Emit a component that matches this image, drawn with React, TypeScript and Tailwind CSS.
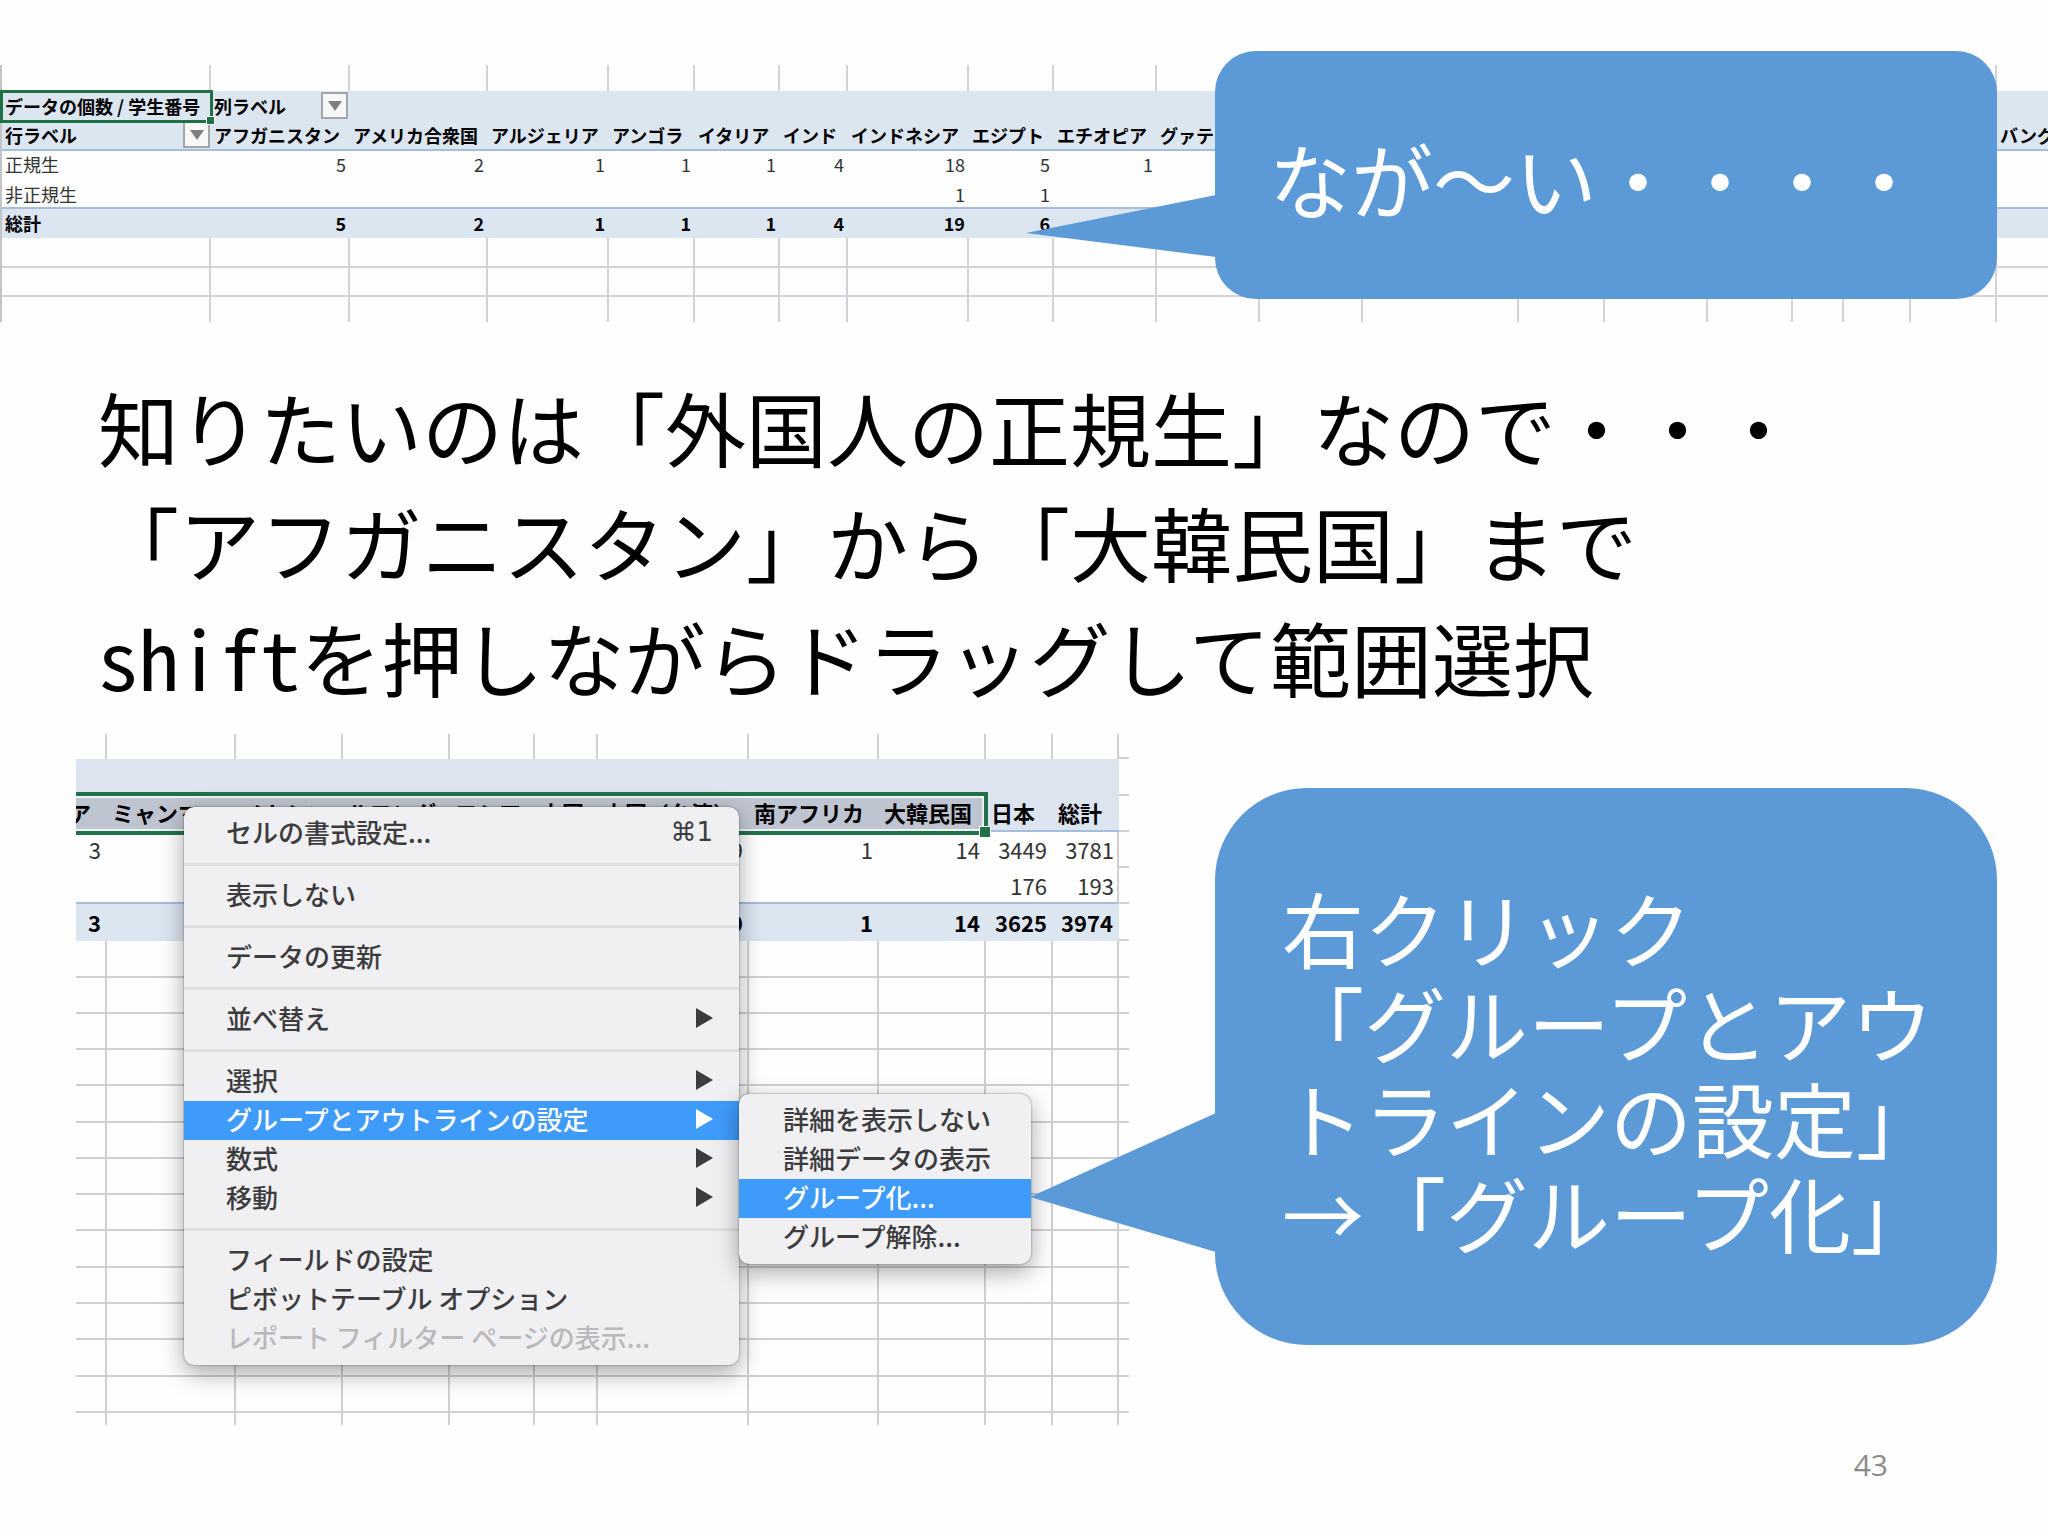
import type { ReactNode } from "react";
import clsx from "clsx";

const countries = [
  { name: "アフガニスタン", width: "w-[139px]", regular: "5", other: "", total: "5" },
  { name: "アメリカ合衆国", width: "w-[138px]", regular: "2", other: "", total: "2" },
  { name: "アルジェリア", width: "w-[121px]", regular: "1", other: "", total: "1" },
  { name: "アンゴラ", width: "w-[86px]", regular: "1", other: "", total: "1" },
  { name: "イタリア", width: "w-[85px]", regular: "1", other: "", total: "1" },
  { name: "インド", width: "w-[68px]", regular: "4", other: "", total: "4" },
  { name: "インドネシア", width: "w-[121px]", regular: "18", other: "1", total: "19" },
  { name: "エジプト", width: "w-[85px]", regular: "5", other: "1", total: "6" },
  { name: "エチオピア", width: "w-[103px]", regular: "1", other: "", total: "" },
  { name: "グァテマラ", width: "w-[103px]", regular: "", other: "", total: "" },
  { name: "", width: "w-[103px]", regular: "", other: "", total: "" },
  { name: "", width: "w-[156px]", regular: "", other: "", total: "" },
  { name: "", width: "w-[86px]", regular: "", other: "", total: "" },
  { name: "", width: "w-[103px]", regular: "", other: "", total: "" },
  { name: "", width: "w-[85px]", regular: "", other: "", total: "" },
  { name: "", width: "w-[51px]", regular: "", other: "", total: "" },
  { name: "", width: "w-[67px]", regular: "", other: "", total: "" },
  { name: "", width: "w-[86px]", regular: "", other: "", total: "" },
  { name: "バングラデシュ", width: "w-[139px]", regular: "", other: "", total: "" },
];

const detail = [
  { name: "ア", width: "w-[31px]", regular: "3", other: "", total: "3", selected: true },
  { name: "ミャンマー", width: "w-[129px]", regular: "", other: "", total: "", selected: true },
  { name: "メキシコ", width: "w-[107px]", regular: "", other: "", total: "", selected: true },
  { name: "ルワンダ", width: "w-[107px]", regular: "", other: "", total: "", selected: true },
  { name: "ロシア", width: "w-[85px]", regular: "", other: "", total: "", selected: true },
  { name: "中国", width: "w-[63px]", regular: "", other: "", total: "", selected: true },
  { name: "中国（台湾）", width: "w-[151px]", regular: "9", other: "", total: "9", selected: true },
  { name: "南アフリカ", width: "w-[130px]", regular: "1", other: "", total: "1", selected: true },
  { name: "大韓民国", width: "w-[107px]", regular: "14", other: "", total: "14", selected: true },
  { name: "日本", width: "w-[67px]", regular: "3449", other: "176", total: "3625", selected: false },
  { name: "総計", width: "w-[66px]", regular: "3781", other: "193", total: "3974", selected: false },
];

// empty sheet rows under the pivot table
const blankRows = [
  "h-[37px]", "h-[36px]", "h-[36px]", "h-[36px]", "h-[37px]", "h-[36px]", "h-[36px]",
  "h-[36px]", "h-[37px]", "h-[36px]", "h-[36px]", "h-[37px]", "h-[36px]",
];

type Entry = { label: string; shortcut?: string; arrow?: boolean; active?: boolean; disabled?: boolean };

const menuGroups: Entry[][] = [
  [{ label: "セルの書式設定...", shortcut: "⌘1" }],
  [{ label: "表示しない" }],
  [{ label: "データの更新" }],
  [{ label: "並べ替え", arrow: true }],
  [
    { label: "選択", arrow: true },
    { label: "グループとアウトラインの設定", arrow: true, active: true },
    { label: "数式", arrow: true },
    { label: "移動", arrow: true },
  ],
  [
    { label: "フィールドの設定" },
    { label: "ピボットテーブル オプション" },
    { label: "レポート フィルター ページの表示...", disabled: true },
  ],
];

const submenu: Entry[] = [
  { label: "詳細を表示しない" },
  { label: "詳細データの表示" },
  { label: "グループ化...", active: true },
  { label: "グループ解除..." },
];

function FilterButton({ label }: { label: string }) {
  return (
    <button
      type="button"
      aria-label={label}
      className="flex h-[27px] w-[27px] shrink-0 items-center justify-center border-2 border-[#a3a5a8] bg-[#f7f7f8]"
    >
      <svg viewBox="0 0 14 10" className="h-[10px] w-[14px]">
        <path d="M0 0h14L7 10z" fill="#7f7f7f" />
      </svg>
    </button>
  );
}

function MenuItem({ item, pad }: { item: Entry; pad: string }) {
  return (
    <button
      type="button"
      disabled={item.disabled}
      className={clsx(
        "flex h-[39px] w-full items-center justify-between whitespace-nowrap pb-1 text-left text-[26px] leading-none",
        pad,
        item.active ? "bg-[#3f9bfa] text-white" : item.disabled ? "text-[#b9b8ba]" : "text-[#3c3c3e]"
      )}
    >
      <span>{item.label}</span>
      {item.shortcut && <span className="font-['DejaVu_Sans','Noto_Sans_CJK_JP',sans-serif]">{item.shortcut}</span>}
      {item.arrow && (
        <svg viewBox="0 0 17 20" className="h-5 w-[17px]">
          <path d="M0 0l17 10L0 20z" fill="currentColor" />
        </svg>
      )}
    </button>
  );
}

function SummaryTable() {
  const grid = "border-r-2 border-[#d3d2d6]";
  return (
    <table className="w-[2108px] table-fixed border-separate border-spacing-0 border-l-2 border-[#c4c4c8] text-[18px] leading-none text-black">
      <colgroup>
        <col className="w-[209px]" />
        {countries.map((c, i) => (
          <col key={i} className={c.width} />
        ))}
      </colgroup>
      <tbody>
        <tr className="h-[26px]">
          <td className={grid} />
          {countries.map((_, i) => (
            <td key={i} className={grid} />
          ))}
        </tr>
        <tr className="h-[29px] bg-[#dce6f1]">
          <th className="relative p-0 pl-[3px] text-left whitespace-nowrap">
            データの個数 / 学生番号
            <span className="absolute -top-px -bottom-[3px] -left-[2px] -right-[2px] border-[3px] border-[#1f7145]" />
            <span className="absolute -bottom-[5px] -right-[4px] h-[9px] w-[9px] border border-white bg-[#1f7145]" />
          </th>
          <th className="p-0 pl-[3px]">
            <div className="flex items-center justify-between pr-[2px]">
              列ラベル
              <FilterButton label="列ラベルの絞り込み" />
            </div>
          </th>
          {countries.slice(1).map((_, i) => (
            <th key={i} />
          ))}
        </tr>
        <tr className="h-[31px] bg-[#dce6f1]">
          <th className="border-b-2 border-[#a5bedb] p-0 pl-[3px]">
            <div className="flex items-center justify-between pr-px">
              行ラベル
              <FilterButton label="行ラベルの絞り込み" />
            </div>
          </th>
          {countries.map((c, i) => (
            <th key={i} className="border-b-2 border-[#a5bedb] p-0 pl-[3px] text-left whitespace-nowrap">
              {c.name}
            </th>
          ))}
        </tr>
        <tr className="h-[29px]">
          <td className="p-0 pb-1 pl-[3px] text-[#333]">正規生</td>
          {countries.map((c, i) => (
            <td key={i} className="p-0 pr-1 pb-1 text-right text-[#333]">{c.regular}</td>
          ))}
        </tr>
        <tr className="h-[29px]">
          <td className="border-b-2 border-[#a5bedb] p-0 pl-[3px] text-[#333]">非正規生</td>
          {countries.map((c, i) => (
            <td key={i} className="border-b-2 border-[#a5bedb] p-0 pr-1 text-right text-[#333]">{c.other}</td>
          ))}
        </tr>
        <tr className="h-[29px] bg-[#dce6f1]">
          <th className="p-0 pb-0.5 pl-[3px] text-left">総計</th>
          {countries.map((c, i) => (
            <td key={i} className="p-0 pr-1 pb-0.5 text-right font-bold">{c.total}</td>
          ))}
        </tr>
        {["h-[30px]", "h-[29px]"].map((h) => (
          <tr key={h} className={h}>
            <td className={clsx(grid, "border-b-2")} />
            {countries.map((_, i) => (
              <td key={i} className={clsx(grid, "border-b-2")} />
            ))}
          </tr>
        ))}
        <tr className="h-[25px]">
          <td className={grid} />
          {countries.map((_, i) => (
            <td key={i} className={grid} />
          ))}
        </tr>
      </tbody>
    </table>
  );
}

function DetailTable() {
  const grid = "border-r-2 border-[#d0cfd4]";
  const stub = "border-b-2 border-[#d0cfd4]";
  return (
    <table className="w-[1053px] table-fixed border-separate border-spacing-0 text-[22px] leading-none text-black">
      <colgroup>
        {detail.map((c) => (
          <col key={c.name} className={c.width} />
        ))}
        <col className="w-[10px]" />
      </colgroup>
      <tbody>
        <tr className="h-[25px]">
          {detail.map((c) => (
            <td key={c.name} className={grid} />
          ))}
          <td className={stub} />
        </tr>
        <tr className="h-[37px]">
          {detail.map((c) => (
            <td key={c.name} className="bg-[#dce4f0]" />
          ))}
          <td className={stub} />
        </tr>
        <tr className="h-[36px]">
          {detail.map((c, i) => (
            <th
              key={c.name}
              className={clsx(
                "border-b-2 border-[#a5bedb] p-0 pb-0.5 text-left whitespace-nowrap",
                c.selected ? "bg-[#bfc5d0]" : "bg-[#dce4f0]"
              )}
            >
              <div className={clsx("flex", i === 0 ? "justify-end pr-4" : "pl-[5px]")}>
                <span>{c.name}</span>
              </div>
            </th>
          ))}
          <td className={stub} />
        </tr>
        <tr className="h-[36px]">
          {detail.map((c, i) => (
            <td key={c.name} className={clsx("p-0 pb-0.5 text-right text-[#333]", i === 10 ? "border-r-2 border-[#d0cfd4] pr-[3px]" : "pr-[6px]")}>
              {c.regular}
            </td>
          ))}
          <td className={stub} />
        </tr>
        <tr className="h-[36px]">
          {detail.map((c, i) => (
            <td key={c.name} className={clsx("border-b-2 border-b-[#a5bedb] p-0 text-right text-[#333]", i === 10 ? "border-r-2 border-r-[#d0cfd4] pr-[3px]" : "pr-[6px]")}>
              {c.other}
            </td>
          ))}
          <td className={stub} />
        </tr>
        <tr className="h-[37px]">
          {detail.map((c) => (
            <td key={c.name} className="bg-[#dce6f1] p-0 pr-[6px] pb-0.5 text-right font-bold">
              {c.total}
            </td>
          ))}
          <td className={stub} />
        </tr>
        {blankRows.map((h, r) => (
          <tr key={r} className={h}>
            {detail.map((c) => (
              <td key={c.name} className={clsx(grid, "border-b-2")} />
            ))}
            <td className={stub} />
          </tr>
        ))}
        <tr className="h-[12px]">
          {detail.map((c) => (
            <td key={c.name} className={grid} />
          ))}
          <td />
        </tr>
      </tbody>
    </table>
  );
}

function ContextMenu() {
  return (
    <div className="absolute top-[73px] left-[108px] w-[555px] rounded-[10px] bg-[#f0eff1] py-[7px] font-medium shadow-[0_0_2px_rgba(0,0,0,0.5),0_8px_24px_rgba(0,0,0,0.35)]">
      {menuGroups.map((group, g) => (
        <div key={g}>
          {g > 0 && (
            <div className="flex h-[23px] items-center">
              <div className="h-[3px] w-full bg-[#dfdee0]" />
            </div>
          )}
          {group.map((item) => (
            <MenuItem key={item.label} item={item} pad="pl-[42px] pr-[26px]" />
          ))}
        </div>
      ))}
    </div>
  );
}

function Callout({ className, tail, children }: { className: string; tail: ReactNode; children: ReactNode }) {
  return (
    <div className={clsx("flex items-center bg-[#5b9ad6] pt-1 text-[82px] leading-[95px] whitespace-nowrap text-white", className)}>
      {tail}
      {children}
    </div>
  );
}

export default function App() {
  return (
    <main className="min-h-screen overflow-hidden bg-[#fefefe] font-['Noto_Sans_CJK_JP',sans-serif]">
      <section className="relative pt-[65px]">
        <div className="overflow-hidden">
          <SummaryTable />
        </div>
        <Callout
          className="absolute top-[51px] right-[51px] h-[248px] w-[782px] rounded-[41px] pl-[54px]"
          tail={
            <svg viewBox="0 0 190 62" className="absolute top-[144px] right-full -mr-px h-[62px] w-[190px]">
              <path d="M190 0L0 38l190 24z" fill="#5b9ad6" />
            </svg>
          }
        >
          <p>なが〜い・・・・</p>
        </Callout>
      </section>

      <section className="mt-[46px] px-[98px] text-[81px] leading-[115px] whitespace-nowrap text-black">
        <p>知りたいのは「外国人の正規生」なので・・・</p>
        <p>「アフガニスタン」から「大韓民国」まで</p>
        <p>
          <span className="font-['Noto_Sans_Mono_CJK_JP','Noto_Sans_CJK_JP',monospace]">shift</span>
          を押しながらドラッグして範囲選択
        </p>
      </section>

      <section className="mt-[21px] flex items-start pr-[51px] pl-[76px]">
        <div className="relative w-[1053px] shrink-0 overflow-hidden">
          <DetailTable />
          <div className="absolute top-[58px] -left-[6px] h-[43px] w-[918px] border-4 border-[#22714a] shadow-[inset_0_0_0_2px_#eef2f5]" />
          <div className="absolute top-[92px] left-[903px] h-[12px] w-[12px] border border-white bg-[#22714a]" />
          <ContextMenu />
          <div className="absolute top-[360px] left-[663px] w-[292px] rounded-[10px] bg-[#f0eff1] py-[7px] font-medium shadow-[0_0_2px_rgba(0,0,0,0.5),0_8px_24px_rgba(0,0,0,0.35)]">
            {submenu.map((item) => (
              <MenuItem key={item.label} item={item} pad="pl-[44px] pr-5" />
            ))}
          </div>
        </div>
        <Callout
          className="relative mt-[54px] ml-[86px] h-[557px] flex-1 rounded-[92px] pl-[67px]"
          tail={
            <svg viewBox="0 0 186 139" className="absolute top-[325px] right-full -mr-px h-[139px] w-[186px]">
              <path d="M186 0L0 84l186 55z" fill="#5b9ad6" />
            </svg>
          }
        >
          <p>
            右クリック
            <br />
            「グループとアウ
            <br />
            トラインの設定」
            <br />→「グループ化」
          </p>
        </Callout>
      </section>

      <footer className="mt-5 pr-[160px] text-right font-['Open_Sans',sans-serif] text-[30px] leading-10 text-[#8b8b8b]">43</footer>
    </main>
  );
}
